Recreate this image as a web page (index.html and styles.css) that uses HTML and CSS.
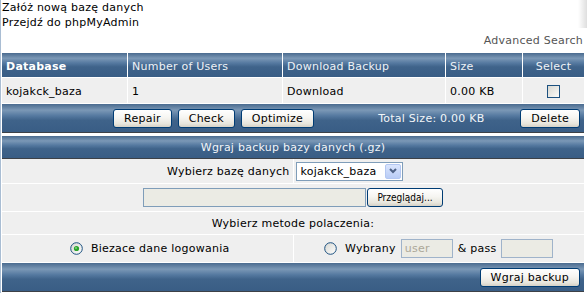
FILE: index.html
```html
<!DOCTYPE html>
<html lang="pl">
<head>
<meta charset="utf-8">
<title>Bazy danych</title>
<link rel="stylesheet" href="styles.css">
</head>
<body>
<div class="corner-shade"></div>
<div class="page">
  <div class="links">
    <a class="link" href="#">Załóż nową bazę danych</a>
    <a class="link" href="#">Przejdź do phpMyAdmin</a>
  </div>
  <div class="adv">Advanced Search</div>

  <table class="dbtable">
    <thead>
      <tr>
        <th class="c1 strong">Database</th>
        <th class="c2">Number of Users</th>
        <th class="c3">Download Backup</th>
        <th class="c4">Size</th>
        <th class="c5 center">Select</th>
      </tr>
    </thead>
    <tbody>
      <tr>
        <td>kojakck_baza</td>
        <td>1</td>
        <td>Download</td>
        <td>0.00 KB</td>
        <td class="center"><span class="checkbox"></span></td>
      </tr>
    </tbody>
  </table>

  <div class="bar actions">
    <div class="btn-group">
      <button class="btn">Repair</button>
      <button class="btn">Check</button>
      <button class="btn">Optimize</button>
    </div>
    <span class="total">Total Size: 0.00 KB</span>
    <button class="btn delete">Delete</button>
  </div>

  <div class="bar title">Wgraj backup bazy danych (.gz)</div>

  <div class="form">
    <div class="cell to-right">Wybierz bazę danych</div>
    <div class="cell to-left">
      <span class="select">
        <span class="select-text">kojakck_baza</span>
        <span class="select-arrow"><svg width="10" height="8" viewBox="0 0 10 8"><path d="M2 2 L5 5 L8 2" fill="none" stroke="#4d6185" stroke-width="2"/></svg></span>
      </span>
    </div>
    <div class="cell span centered">
      <span class="file-field"></span><button class="btn browse">Przeglądaj...</button>
    </div>
    <div class="cell span centered">Wybierz metode polaczenia:</div>
    <div class="cell centered">
      <svg class="radio" width="13" height="13" viewBox="0 0 13 13"><defs><linearGradient id="rg1" x1="0" y1="0" x2="1" y2="1"><stop offset="0" stop-color="#d6d6d0"/><stop offset="1" stop-color="#ffffff"/></linearGradient></defs><circle cx="6.5" cy="6.5" r="5.8" fill="url(#rg1)" stroke="#1c5180" stroke-width="1"/><circle cx="6.5" cy="6.5" r="2.6" fill="#2aa52a"/><circle cx="6" cy="6" r="1" fill="#7fd27f"/></svg>
      <span>Biezace dane logowania</span>
    </div>
    <div class="cell centered">
      <svg class="radio" width="13" height="13" viewBox="0 0 13 13"><defs><linearGradient id="rg2" x1="0" y1="0" x2="1" y2="1"><stop offset="0" stop-color="#d6d6d0"/><stop offset="1" stop-color="#ffffff"/></linearGradient></defs><circle cx="6.5" cy="6.5" r="5.8" fill="url(#rg2)" stroke="#1c5180" stroke-width="1"/></svg>
      <span>Wybrany</span>
      <span class="text-field muted">user</span>
      <span>&amp; pass</span>
      <span class="text-field"></span>
    </div>
  </div>

  <div class="bar footer">
    <button class="btn">Wgraj backup</button>
  </div>
</div>
</body>
</html>
```

FILE: styles.css
```css
* { box-sizing: border-box; }

html, body { margin: 0; padding: 0; }

body {
  position: relative;
  min-height: 293px;
  background: #fff;
  border-left: 1px solid #a9bdd3;
  padding-right: 2px;
  font-family: "DejaVu Sans", Verdana, sans-serif;
  font-size: 11px;
  letter-spacing: 0.25px;
  color: #000;
}

.corner-shade {
  position: absolute;
  top: 0;
  right: 0;
  width: 9px;
  height: 28px;
  background: linear-gradient(to right, rgba(0,0,0,0), rgba(0,0,0,0.13));
}

.links {
  display: flex;
  flex-direction: column;
  line-height: 15px;
  padding-left: 1px;
}

.link { color: #000; text-decoration: none; }

.adv {
  margin-top: 4px;
  line-height: 14px;
  text-align: right;
  padding-right: 2px;
  color: #555;
}

.dbtable {
  width: 100%;
  margin-top: 4px;
  border-spacing: 1px;
  table-layout: fixed;
}

.dbtable th,
.dbtable td {
  padding: 0 4px;
  text-align: left;
  white-space: nowrap;
  vertical-align: middle;
}

.dbtable th {
  height: 24px;
  padding-top: 2px;
  font-weight: normal;
  color: #eef2f6;
  background: linear-gradient(to bottom, #4a6b8f 0%, #7b98b6 22%, #5579a0 42%, #3f638a 58%, #395d85 100%);
}

.dbtable th.strong { font-weight: bold; color: #fff; }

.dbtable td {
  height: 25px;
  padding-top: 2px;
  background: #efefef;
}

.dbtable .center { text-align: center; }

.c1 { width: 125px; }
.c2 { width: 154px; }
.c3 { width: 162px; }
.c4 { width: 76px; }

.checkbox {
  display: inline-block;
  width: 13px;
  height: 13px;
  vertical-align: middle;
  border: 1px solid #1c5180;
  background: linear-gradient(135deg, #d8d8d2, #fbfbf9);
}

.bar {
  margin: 0 1px;
  color: #fff;
  border-bottom: 1px solid #3d4147;
  background: linear-gradient(to bottom, #4a6b8f 0%, #7b98b6 22%, #5579a0 42%, #3f638a 58%, #395d85 100%);
}

.actions {
  height: 29px;
  display: flex;
  align-items: center;
  padding: 0 4px 0 111px;
}

.btn-group { display: flex; gap: 6px; }

.total { margin-left: 64px; color: #f2f5f8; }

.delete { margin-left: auto; }

.btn {
  height: 19px;
  padding: 0 10px;
  font-family: "DejaVu Sans", Verdana, sans-serif;
  font-size: 11px;
  letter-spacing: 0.25px;
  color: #000;
  border: 1px solid #003c74;
  border-radius: 3px;
  background: linear-gradient(to bottom, #ffffff 0%, #f6f5f1 45%, #e8e6dd 80%, #d6d1c6 100%);
}

.title {
  margin-top: 3px;
  height: 23px;
  display: flex;
  align-items: center;
  justify-content: center;
  color: #f2f5f8;
}

.form {
  margin: 0 1px;
  display: grid;
  grid-template-columns: 1fr 1fr;
  grid-template-rows: 24px 27px 22px 27px;
  gap: 1px;
  background: #fff;
}

.cell {
  background: #efefef;
  display: flex;
  align-items: center;
}

.span { grid-column: 1 / -1; }

.to-right { justify-content: flex-end; padding-right: 3px; }
.to-left { justify-content: flex-start; padding-left: 2px; }
.centered { justify-content: center; }

.select {
  display: inline-flex;
  align-items: center;
  width: 107px;
  height: 19px;
  border: 1px solid #7f9db9;
  background: #fff;
}

.select-text { flex: 1; padding-left: 4px; }

.select-arrow {
  width: 16px;
  height: 15px;
  margin-right: 1px;
  display: flex;
  align-items: center;
  justify-content: center;
  border: 1px solid #b3c7f2;
  border-radius: 2px;
  background: linear-gradient(to bottom, #dae5fd, #b9ccf6);
}

.file-field {
  width: 223px;
  height: 19px;
  border: 1px solid #7f9db9;
  background: #ebebe4;
}

.browse {
  width: 76px;
  padding: 0;
  margin-left: 1px;
  font-family: "DejaVu Sans Condensed", Tahoma, sans-serif;
  font-size: 10px;
  letter-spacing: 0;
}

.radio { margin: 0 8px 0 5px; flex: none; }

.text-field {
  width: 52px;
  height: 19px;
  margin: 0 5px;
  padding-left: 3px;
  display: inline-flex;
  align-items: center;
  border: 1px solid #9fb3ca;
  background: #ebebe4;
}

.muted { color: #aca899; }

.footer {
  margin-top: 1px;
  height: 29px;
  display: flex;
  align-items: center;
  justify-content: flex-end;
  padding-right: 4px;
}
```
